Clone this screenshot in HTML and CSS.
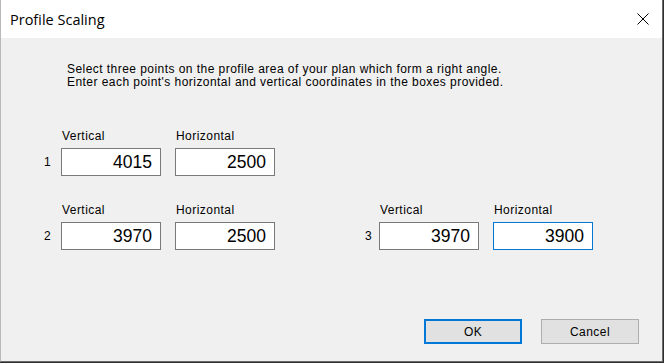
FILE: index.html
```html
<!DOCTYPE html>
<html>
<head>
<meta charset="utf-8">
<link rel="stylesheet" href="styles.css">
</head>
<body>
<div class="window">
  <div class="titlebar">
    <span class="title">Profile Scaling</span>
    <svg class="close" width="12" height="12" viewBox="0 0 12 12"><path d="M0.5 0.5 L11.5 11.5 M11.5 0.5 L0.5 11.5" stroke="#000" stroke-width="1" fill="none"/></svg>
  </div>
  <div class="body">
    <div class="intro">
      <div>Select three points on the profile area of your plan which form a right angle.</div>
      <div>Enter each point's horizontal and vertical coordinates in the boxes provided.</div>
    </div>
    <div class="row row-first">
      <div class="group">
        <div class="num">1</div>
        <div class="field"><label class="lbl">Vertical</label><input class="box" type="text" value="4015"></div>
        <div class="field"><label class="lbl">Horizontal</label><input class="box" type="text" value="2500"></div>
      </div>
    </div>
    <div class="row row-second">
      <div class="group">
        <div class="num">2</div>
        <div class="field"><label class="lbl">Vertical</label><input class="box" type="text" value="3970"></div>
        <div class="field"><label class="lbl">Horizontal</label><input class="box" type="text" value="2500"></div>
      </div>
      <div class="group group-third">
        <div class="num num-narrow">3</div>
        <div class="field"><label class="lbl">Vertical</label><input class="box" type="text" value="3970"></div>
        <div class="field"><label class="lbl">Horizontal</label><input class="box box-focus" type="text" value="3900"></div>
      </div>
    </div>
    <div class="buttons">
      <button class="btn btn-default">OK</button>
      <button class="btn">Cancel</button>
    </div>
  </div>
</div>
</body>
</html>
```
FILE: styles.css
```css
* { box-sizing: border-box; }
html, body { margin: 0; padding: 0; }
body {
  background: #2f2f2f;
  width: 664px;
  height: 363px;
  overflow: hidden;
  font-family: "Liberation Sans", Arial, sans-serif;
}
.window {
  width: 663px;
  height: 362px;
  display: flex;
  flex-direction: column;
  border-left: 1px solid #b9b9b9;
  border-right: 1px solid #6a6a6a;
  border-bottom: 1px solid #6a6a6a;
  background: #f0f0f0;
}
.titlebar {
  height: 38px;
  flex: none;
  background: #ffffff;
  display: flex;
  align-items: center;
  justify-content: space-between;
  padding-left: 9px;
  padding-right: 13px;
}
.title {
  font-family: "Open Sans", "Noto Sans", sans-serif;
  font-size: 14.5px;
  color: #000;
}
.close { display: block; }
.body {
  flex: 1;
  display: flex;
  flex-direction: column;
  background: #f0f0f0;
  font-size: 12px;
  letter-spacing: 0.45px;
  line-height: 13px;
  color: #000;
}
.intro {
  padding-top: 25px;
  padding-left: 66px;
}
.row {
  display: flex;
}
.row-first {
  margin-top: 41px;
  padding-left: 43px;
}
.row-second {
  margin-top: 28px;
  padding-left: 43px;
}
.group {
  display: flex;
  gap: 14px;
  align-items: flex-end;
}
.group-third {
  margin-left: 90px;
}
.num {
  height: 28px;
  line-height: 29px;
}
.group .num { width: 17px; margin-right: -14px; }
.group .num-narrow { width: 14px; }
.field {
  display: flex;
  flex-direction: column;
  gap: 5px;
}
.lbl {
  display: block;
  height: 13px;
  padding-left: 1px;
}
.box {
  width: 100px;
  height: 28px;
  margin: 0;
  border: 1px solid #7a7a7a;
  background: #fff;
  font-family: "Liberation Sans", Arial, sans-serif;
  font-size: 17.5px;
  letter-spacing: 0;
  color: #000;
  text-align: right;
  padding: 0 8px 0 0;
  outline: none;
}
.box-focus { border-color: #0078d7; }
.buttons {
  margin-top: auto;
  display: flex;
  justify-content: flex-end;
  gap: 19px;
  padding-right: 23px;
  padding-bottom: 17px;
}
.btn {
  width: 98px;
  height: 25px;
  margin: 0;
  background: #e1e1e1;
  border: 1px solid #adadad;
  font-family: "Liberation Sans", Arial, sans-serif;
  font-size: 12px;
  letter-spacing: 0.45px;
  color: #000;
  padding: 0;
}
.btn-default { border: 2px solid #0078d7; }
```
